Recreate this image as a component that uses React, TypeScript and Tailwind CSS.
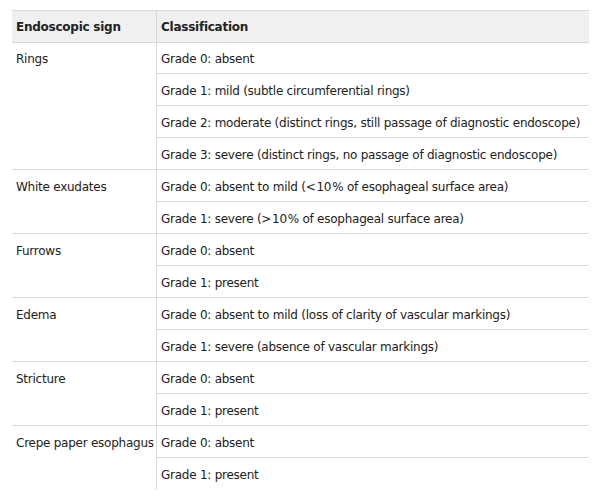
const rows: { sign: string; grades: string[] }[] = [
  {
    sign: "Rings",
    grades: [
      "Grade 0: absent",
      "Grade 1: mild (subtle circumferential rings)",
      "Grade 2: moderate (distinct rings, still passage of diagnostic endoscope)",
      "Grade 3: severe (distinct rings, no passage of diagnostic endoscope)",
    ],
  },
  {
    sign: "White exudates",
    grades: [
      "Grade 0: absent to mild (<\u200a10\u200a% of esophageal surface area)",
      "Grade 1: severe (>\u200a10\u200a% of esophageal surface area)",
    ],
  },
  { sign: "Furrows", grades: ["Grade 0: absent", "Grade 1: present"] },
  {
    sign: "Edema",
    grades: [
      "Grade 0: absent to mild (loss of clarity of vascular markings)",
      "Grade 1: severe (absence of vascular markings)",
    ],
  },
  { sign: "Stricture", grades: ["Grade 0: absent", "Grade 1: present"] },
  { sign: "Crepe paper esophagus", grades: ["Grade 0: absent", "Grade 1: present"] },
]

const spans = ["", "row-span-1", "row-span-2", "row-span-3", "row-span-4"]

export default function App() {
  return (
    <div className="bg-white w-[596px] h-[494px] pt-[10px] pl-[12px] text-[12px] tracking-[-0.25px] text-[#222] font-['DejaVu_Sans',Verdana,sans-serif]">
      <div className="grid grid-cols-[145px_432px] auto-rows-[32px]">
        <div className="h-[33px] bg-[#f0f0f0] border-t border-b border-r border-[#d9d9d9] pl-[4px] pt-[2px] leading-[29px] font-bold">
          Endoscopic sign
        </div>
        <div className="h-[33px] bg-[#f0f0f0] border-t border-b border-[#d9d9d9] pl-[4px] pt-[2px] leading-[29px] font-bold">
          Classification
        </div>
        {rows.map((r, i) => {
          const last = i === rows.length - 1
          return [
            <div
              key={r.sign}
              className={`${spans[r.grades.length]} border-r border-[#d9d9d9] pl-[4px] pt-[3px] leading-[29px] whitespace-nowrap ${last ? "" : "border-b"}`}
            >
              {r.sign}
            </div>,
            ...r.grades.map((g, j) => (
              <div
                key={r.sign + j}
                className={`border-[#d9d9d9] pl-[4px] pt-[3px] leading-[29px] whitespace-nowrap ${last && j === r.grades.length - 1 ? "" : "border-b"}`}
              >
                {g}
              </div>
            )),
          ]
        })}
      </div>
    </div>
  )
}
